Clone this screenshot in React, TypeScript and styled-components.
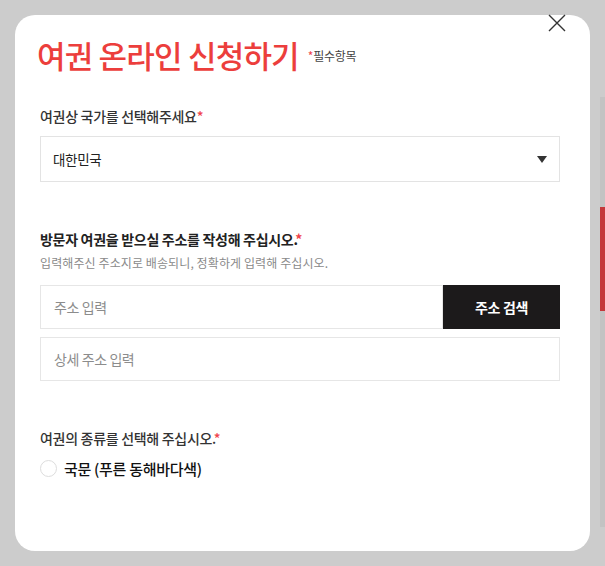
import React from "react";
import styled, { createGlobalStyle } from "styled-components";

const GlobalStyle = createGlobalStyle`
  html, body {
    margin: 0;
    padding: 0;
    background: #cccccc;
    font-family: "Noto Sans CJK KR", "Noto Sans", sans-serif;
  }
  * { box-sizing: border-box; }
`;

const Page = styled.div`
  position: relative;
  width: 605px;
  height: 566px;
  padding: 15px 0 0 15px;
`;

const SideBar = styled.div`
  position: absolute;
  right: 0;
  top: 97px;
  width: 5px;
  height: 430px;
  background: #c3c3c3;
  &::after {
    content: "";
    position: absolute;
    left: 0;
    top: 110px;
    width: 5px;
    height: 104px;
    background: #c4373a;
  }
`;

const Modal = styled.div`
  position: relative;
  width: 575px;
  height: 536px;
  background: #ffffff;
  border-radius: 20px;
  padding: 20px 30px 0 25px;
`;

const CloseButton = styled.button`
  position: absolute;
  top: -1px;
  right: 24px;
  width: 18px;
  height: 18px;
  padding: 0;
  border: 0;
  background: none;
  cursor: pointer;
`;

const TitleRow = styled.div`
  display: flex;
  align-items: flex-end;
  gap: 9px;
  margin: 0 0 31px -3px;
`;

const Title = styled.h1`
  margin: 0;
  font-size: 31px;
  font-weight: 500;
  line-height: 40px;
  letter-spacing: -0.8px;
  color: #ec3e3c;
`;

const Required = styled.span`
  font-size: 12px;
  line-height: 12px;
  color: #444;
  margin-bottom: 13px;
  letter-spacing: -0.3px;
`;

const Star = styled.span`
  color: #f0434b;
`;

const Section = styled.div<{ $gap?: number }>`
  display: flex;
  flex-direction: column;
  margin-bottom: ${(p) => p.$gap ?? 0}px;
`;

const Label = styled.div<{ $strong?: boolean }>`
  font-size: 14px;
  line-height: 20px;
  letter-spacing: -0.3px;
  font-weight: ${(p) => (p.$strong ? 700 : 500)};
  color: ${(p) => (p.$strong ? "#222" : "#333")};
  margin-bottom: 10px;
`;

const SubText = styled.div`
  font-size: 12px;
  line-height: 16px;
  letter-spacing: 0.1px;
  color: #8a8a8a;
  margin: -4px 0 14px;
`;

const SelectBox = styled.div`
  height: 46px;
  border: 1px solid #e3e3e3;
  display: flex;
  align-items: center;
  justify-content: space-between;
  padding: 0 12px 0 12px;
  font-size: 13.5px;
  color: #222;
  letter-spacing: -0.3px;
`;

const Caret = styled.span`
  width: 0;
  height: 0;
  border-left: 5px solid transparent;
  border-right: 5px solid transparent;
  border-top: 7px solid #333;
`;

const InputRow = styled.div`
  display: flex;
  height: 44px;
  margin-bottom: 8px;
`;

const TextInput = styled.div`
  flex: 1 0 auto;
  height: 44px;
  border: 1px solid #e6e6e6;
  display: flex;
  align-items: center;
  padding: 0 13px;
  font-size: 14px;
  color: #8c8c8c;
  letter-spacing: -0.4px;
`;

const SearchButton = styled.button`
  width: 117px;
  height: 44px;
  border: 0;
  background: #1c1a1b;
  color: #fff;
  font-family: inherit;
  font-size: 14px;
  font-weight: 700;
  letter-spacing: -0.3px;
`;

const RadioRow = styled.label`
  display: flex;
  align-items: center;
  gap: 7px;
  margin-top: -1px;
  height: 22px;
`;

const RadioCircle = styled.span`
  width: 17px;
  height: 17px;
  border-radius: 50%;
  border: 1px solid #dddddd;
  background: #fff;
`;

const RadioText = styled.span`
  font-size: 15px;
  font-weight: 500;
  color: #111;
  letter-spacing: -0.3px;
`;

export default function App() {
  return (
    <>
      <GlobalStyle />
      <Page>
        <SideBar />
        <Modal>
          <CloseButton aria-label="닫기">
            <svg width="18" height="18" viewBox="0 0 18 18">
              <path d="M1 1 L17 17 M17 1 L1 17" stroke="#333" strokeWidth="1.4" />
            </svg>
          </CloseButton>
          <TitleRow>
            <Title>여권 온라인 신청하기</Title>
            <Required>
              <Star>*</Star>필수항목
            </Required>
          </TitleRow>

          <Section $gap={47}>
            <Label>
              여권상 국가를 선택해주세요<Star>*</Star>
            </Label>
            <SelectBox>
              대한민국
              <Caret />
            </SelectBox>
          </Section>

          <Section $gap={47}>
            <Label $strong>
              방문자 여권을 받으실 주소를 작성해 주십시오.<Star>*</Star>
            </Label>
            <SubText>입력해주신 주소지로 배송되니, 정확하게 입력해 주십시오.</SubText>
            <InputRow>
              <TextInput>주소 입력</TextInput>
              <SearchButton>주소 검색</SearchButton>
            </InputRow>
            <TextInput>상세 주소 입력</TextInput>
          </Section>

          <Section>
            <Label>
              여권의 종류를 선택해 주십시오.<Star>*</Star>
            </Label>
            <RadioRow>
              <RadioCircle />
              <RadioText>국문 (푸른 동해바다색)</RadioText>
            </RadioRow>
          </Section>
        </Modal>
      </Page>
    </>
  );
}
